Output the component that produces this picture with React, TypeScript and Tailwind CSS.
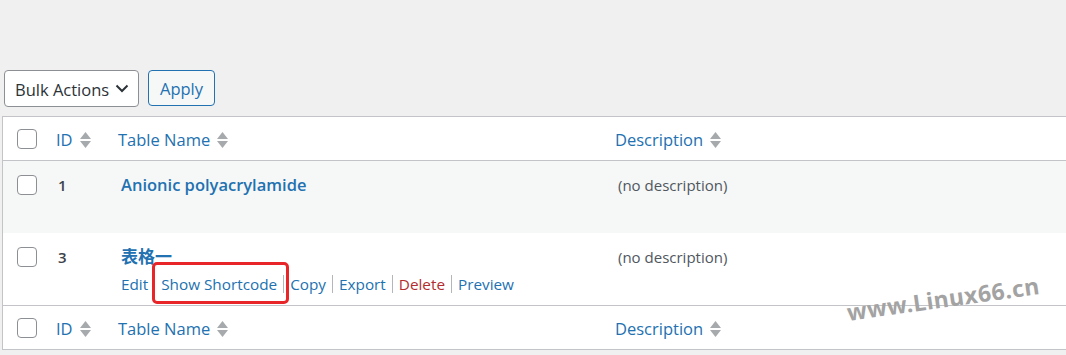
import React from "react";

const font = { fontFamily: '"Open Sans", "Noto Sans", "Noto Sans CJK SC", sans-serif' };

function SortIcon() {
  return (
    <span className="ml-[7px] inline-flex flex-col items-center gap-[2px]">
      <svg width="11" height="7" viewBox="0 0 11 7"><path d="M5.5 0 L11 7 L0 7 Z" fill="#a7aaad" /></svg>
      <svg width="11" height="7" viewBox="0 0 11 7"><path d="M0 0 L11 0 L5.5 7 Z" fill="#a7aaad" /></svg>
    </span>
  );
}

function Checkbox() {
  return <span className="block w-[20px] h-[20px] rounded-[4px] border border-[#8c8f94] bg-white" />;
}

function Sep() {
  return <span className="inline-block w-[1px] h-[18px] bg-[#b4b7ba] mx-[6px] align-[-3px]" />;
}

function HeaderRow({ bottom }: { bottom?: boolean }) {
  return (
    <div className={`flex items-center h-[44px] ${bottom ? "border-t" : "border-b"} border-[#c3c4c7] text-[16.5px] text-[#2271b1]`}>
      <div className="w-[53px] pl-[14px] flex items-center"><Checkbox /></div>
      <div className="w-[62px] flex items-center pt-[3px]">ID<SortIcon /></div>
      <div className="w-[497px] flex items-center pt-[3px]">Table Name<SortIcon /></div>
      <div className="flex items-center pt-[3px]">Description<SortIcon /></div>
    </div>
  );
}

export default function App() {
  return (
    <div className="relative w-[1066px] h-[355px] overflow-hidden bg-[#f0f0f1]" style={font}>
      <div className="pt-[70px] pl-[2px]">
        <div className="flex gap-[9px] ml-[2px] h-[37px]">
          <div className="w-[135px] h-[37px] rounded-[4px] border border-[#8c8f94] bg-white flex items-center pl-[10px] pr-[9px] text-[16.5px] text-[#2c3338]">
            <span className="pt-[3px]">Bulk Actions</span>
            <svg className="ml-auto" width="14" height="9" viewBox="0 0 14 9"><path d="M1.5 1.5 L7 7 L12.5 1.5" fill="none" stroke="#2c3338" strokeWidth="2" /></svg>
          </div>
          <div className="w-[67px] h-[36px] rounded-[4px] border border-[#2271b1] bg-[#f6f7f7] flex items-center justify-center pt-[2px] text-[16.5px] text-[#2271b1]">Apply</div>
        </div>
        <div className="mt-[9px] w-[1090px] border border-[#c3c4c7] bg-white">
          <HeaderRow />
          <div className="flex h-[72px] bg-[#f6f7f7]">
            <div className="w-[53px] pl-[14px] pt-[14px]"><Checkbox /></div>
            <div className="w-[62px] pl-[2px] pt-[13px] leading-[22px] text-[15px] font-semibold text-[#3c434a]">1</div>
            <div className="w-[497px] pl-[3px] pt-[13px] leading-[22px] text-[16.5px] font-semibold text-[#2271b1]">Anionic polyacrylamide</div>
            <div className="pl-[3px] pt-[13px] leading-[22px] text-[15px] text-[#50575e]">(no description)</div>
          </div>
          <div className="flex h-[72px] bg-white">
            <div className="w-[53px] pl-[14px] pt-[14px]"><Checkbox /></div>
            <div className="w-[62px] pl-[2px] pt-[13px] leading-[22px] text-[15px] font-semibold text-[#3c434a]">3</div>
            <div className="w-[497px] pl-[3px] pt-[13px]">
              <div className="leading-[22px] text-[17px] font-semibold text-[#2271b1]">表格一</div>
              <div className="mt-[5px] leading-[22px] text-[15.3px] text-[#2271b1] whitespace-nowrap">
                <span>Edit</span>
                <Sep />
                <span>Show Shortcode</span>
                <Sep />
                <span>Copy</span>
                <Sep />
                <span>Export</span>
                <Sep />
                <span className="text-[#b32d2e]">Delete</span>
                <Sep />
                <span>Preview</span>
              </div>
            </div>
            <div className="pl-[3px] pt-[13px] leading-[22px] text-[15px] text-[#50575e]">(no description)</div>
          </div>
          <HeaderRow bottom />
        </div>
      </div>
      <div className="absolute left-[152px] top-[262px] w-[137px] h-[42px] rounded-[5px] border-[3px] border-[#e8262a]" />
      <div
        className="absolute left-[847px] top-[295px] text-[23px] font-bold text-[#a3a3a3] whitespace-nowrap origin-left -rotate-[8deg]"
        style={{ fontFamily: '"Noto Sans", sans-serif', letterSpacing: "0.5px" }}
      >
        www.Linux66.cn
      </div>
    </div>
  );
}
